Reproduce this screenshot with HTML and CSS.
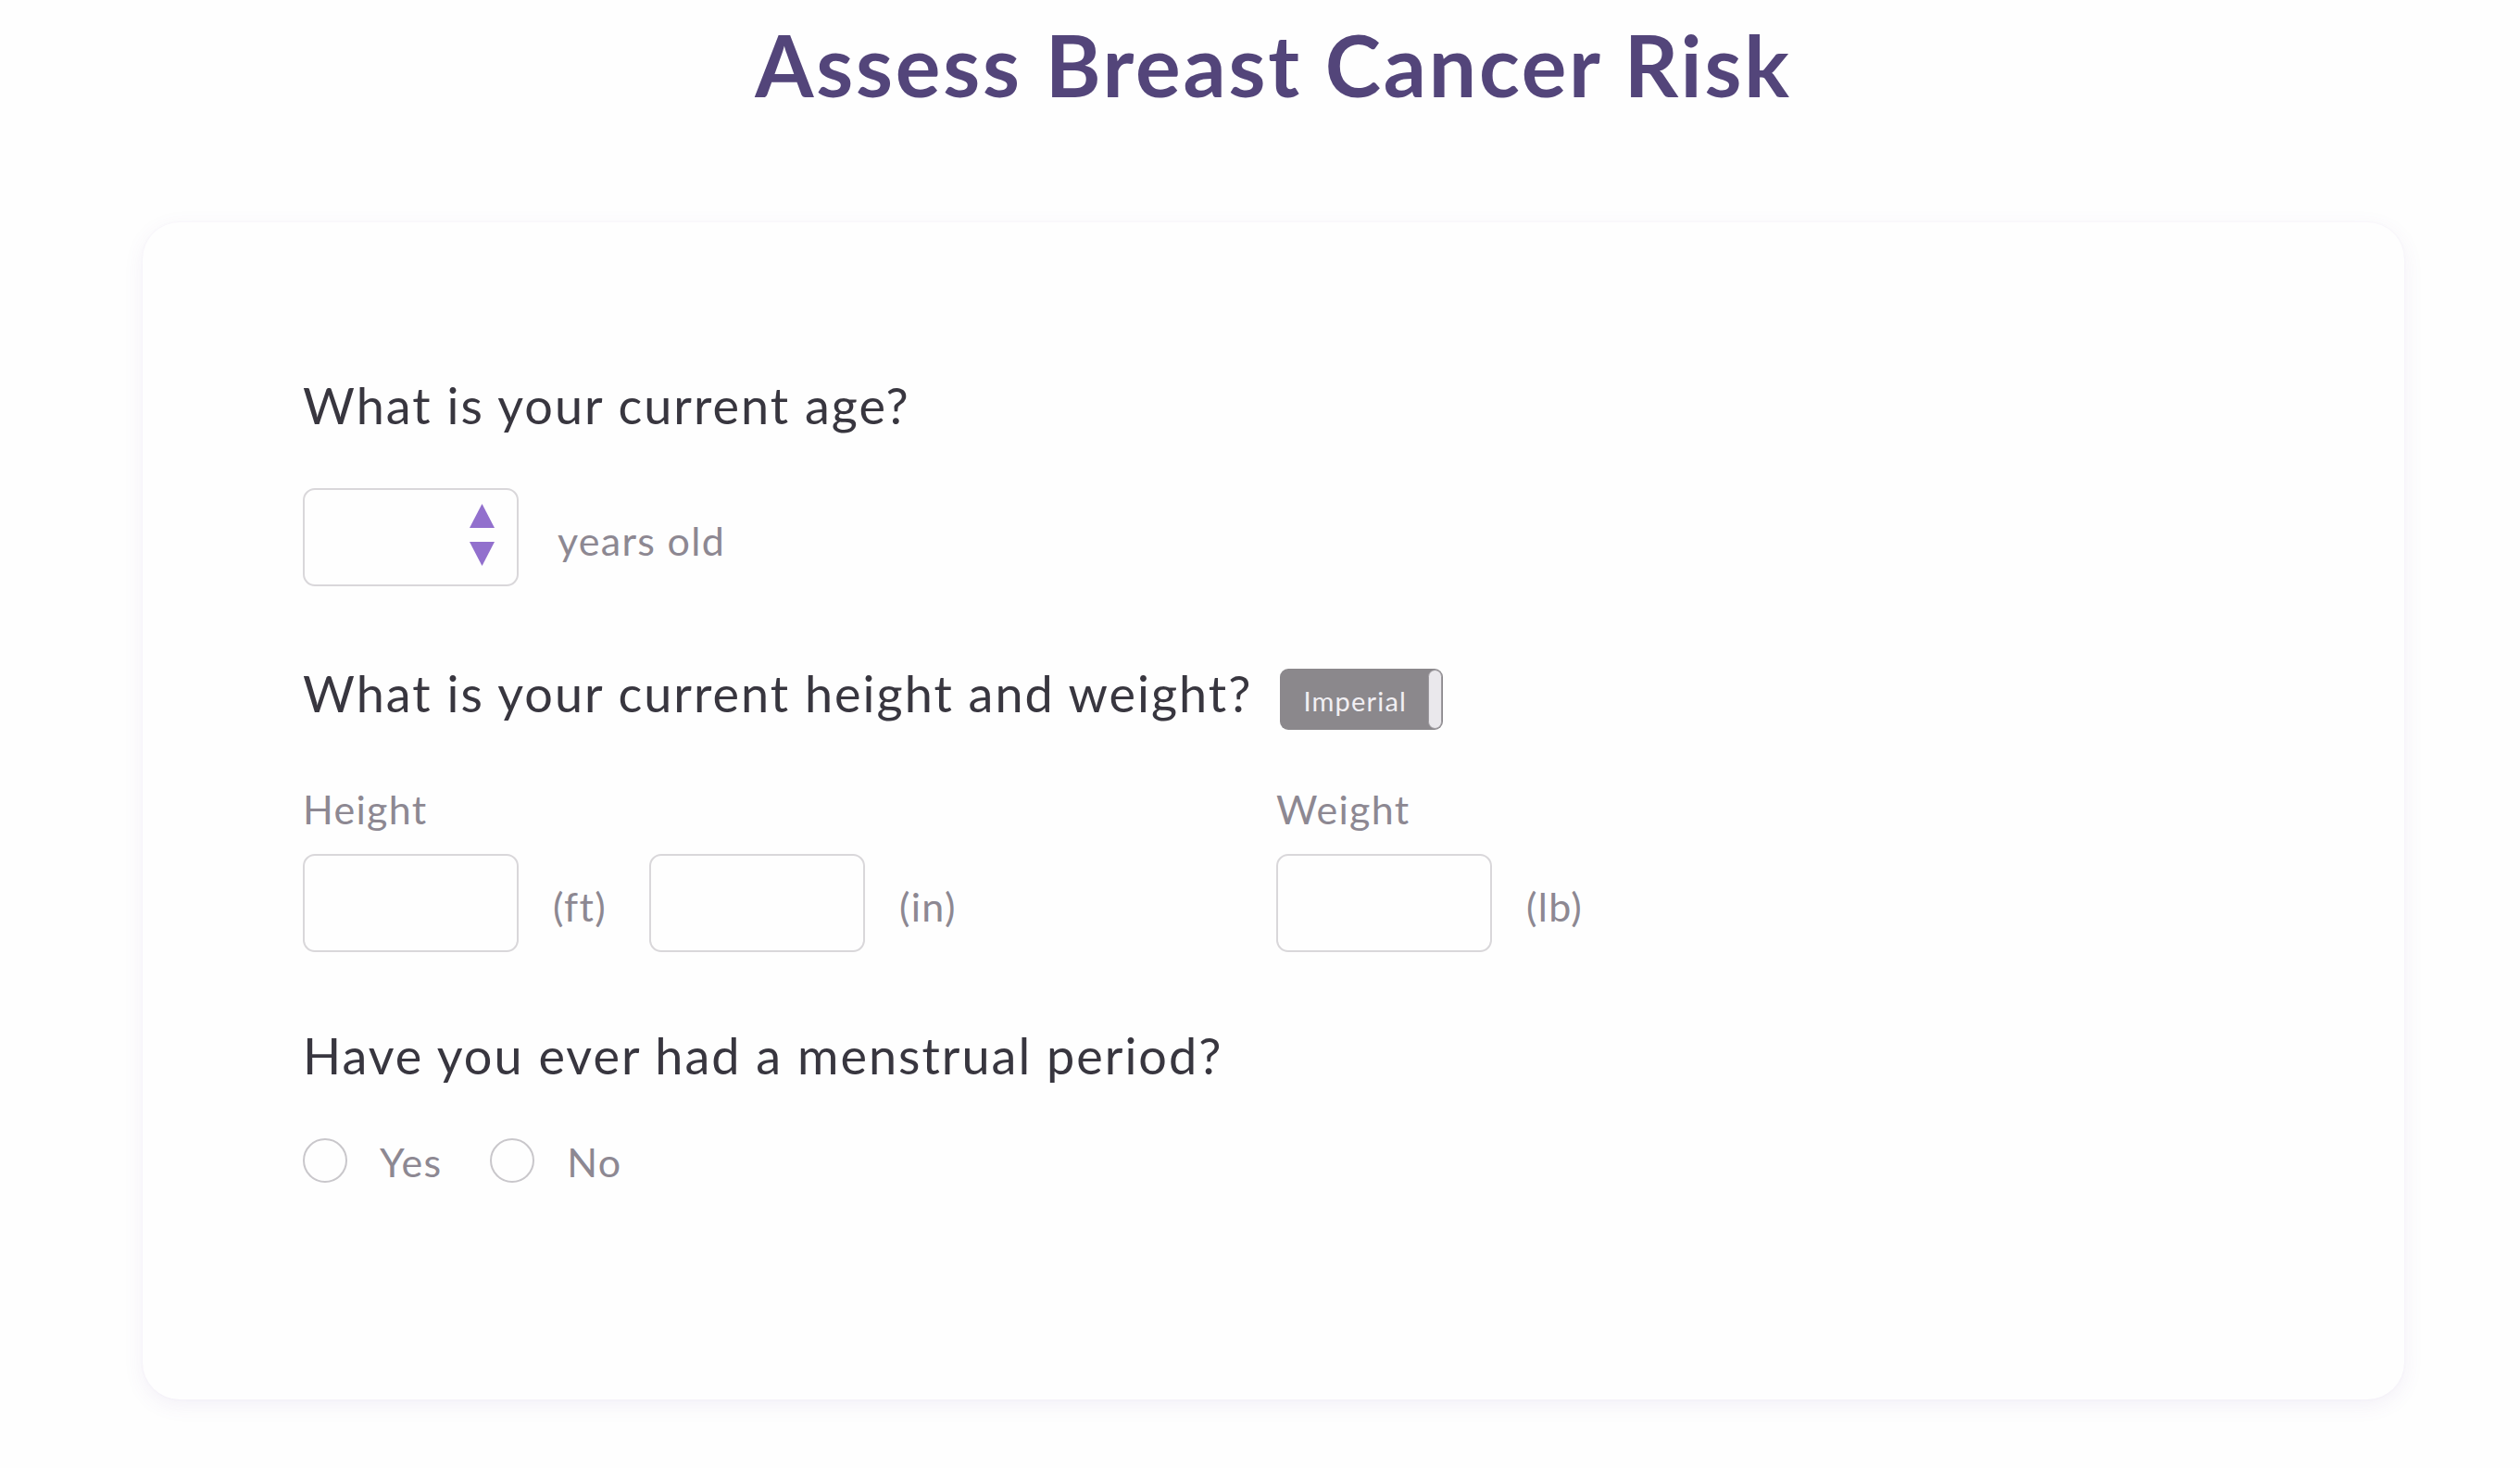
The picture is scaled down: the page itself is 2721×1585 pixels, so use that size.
FILE: index.html
```html
<!DOCTYPE html>
<html lang="en">
<head>
<meta charset="utf-8">
<title>Assess Breast Cancer Risk</title>
<link rel="stylesheet" href="styles.css">
</head>
<body>
<div class="page">
  <h1 class="title">Assess Breast Cancer Risk</h1>
  <div class="card">
    <h2 class="question">What is your current age?</h2>
    <div class="row age-row">
      <div class="box">
        <svg class="spinner" width="27" height="67" viewBox="0 0 27 67" aria-hidden="true">
          <polygon points="13.5,0 27,26 0,26" fill="#9270cd"/>
          <polygon points="0,41 27,41 13.5,67" fill="#9270cd"/>
        </svg>
      </div>
      <span class="unit unit-age">years old</span>
    </div>

    <div class="q-row">
      <h2 class="question">What is your current height and weight?</h2>
      <div class="toggle"><span class="toggle-text">Imperial</span><span class="knob"></span></div>
    </div>

    <div class="measures">
      <div class="measure">
        <div class="label">Height</div>
        <div class="row">
          <div class="box"></div><span class="unit">(ft)</span>
          <div class="box"></div><span class="unit">(in)</span>
        </div>
      </div>
      <div class="measure">
        <div class="label">Weight</div>
        <div class="row">
          <div class="box"></div><span class="unit">(lb)</span>
        </div>
      </div>
    </div>

    <h2 class="question q3">Have you ever had a menstrual period?</h2>
    <div class="radios">
      <span class="radio"></span><span class="radio-label">Yes</span>
      <span class="radio"></span><span class="radio-label">No</span>
    </div>
  </div>
</div>
</body>
</html>
```
FILE: styles.css
```css
html, body {
  margin: 0;
  padding: 0;
  background: #fefefe;
}
body {
  font-family: Lato, "Open Sans", "Liberation Sans", sans-serif;
}
.page {
  padding: 24px 125px 74px 154px;
}
.title {
  margin: 0;
  text-align: center;
  font-size: 91px;
  line-height: 91px;
  font-weight: 700;
  color: #53457a;
  letter-spacing: 2.8px;
}
.card {
  margin-top: 125px;
  background: #fefefe;
  border-radius: 40px;
  box-shadow: 0 6px 22px rgba(110, 80, 170, 0.08), 0 0 3px rgba(110, 80, 170, 0.05);
  padding: 171px 173px 234px 173px;
}
.question {
  margin: 0;
  font-size: 54px;
  line-height: 54px;
  font-weight: 400;
  color: #38363f;
  letter-spacing: 2px;
}
.row {
  display: flex;
  align-items: center;
}
.age-row {
  margin-top: 62px;
}
.box {
  box-sizing: border-box;
  width: 233px;
  height: 106px;
  border: 2px solid #d9d7da;
  border-radius: 13px;
  background: #fefefe;
  display: flex;
  justify-content: flex-end;
  padding: 15px 24px 0 0;
}
.unit {
  font-size: 43px;
  line-height: 43px;
  color: #8d8892;
  margin-left: 37px;
  margin-right: 46px;
  padding-top: 6px;
  letter-spacing: 1.3px;
}
.unit-age {
  margin-left: 42px;
}
.q-row {
  display: flex;
  align-items: flex-start;
  gap: 30px;
  margin-top: 89px;
}
.toggle {
  box-sizing: border-box;
  width: 176px;
  height: 66px;
  background: #8b888c;
  border-radius: 9px;
  display: flex;
  align-items: center;
  justify-content: space-between;
  padding: 1px 1px 1px 25px;
}
.toggle-text {
  font-size: 29px;
  line-height: 29px;
  color: #f1eff3;
  padding-top: 2px;
  letter-spacing: 1.2px;
}
.knob {
  box-sizing: border-box;
  width: 15px;
  height: 64px;
  border-radius: 8px;
  background: #eae8ec;
  border: 1px solid #9d9a9f;
}
.measures {
  display: grid;
  grid-template-columns: 1051px 1fr;
  margin-top: 64px;
}
.label {
  font-size: 43px;
  line-height: 43px;
  color: #8d8892;
  margin-bottom: 27px;
  letter-spacing: 1.3px;
}
.q3 {
  margin-top: 85px;
}
.radios {
  display: flex;
  align-items: center;
  margin-top: 62px;
}
.radio {
  box-sizing: border-box;
  width: 48px;
  height: 48px;
  border: 2px solid #c9c7cb;
  border-radius: 50%;
  background: #fefefe;
}
.radio-label {
  font-size: 43px;
  line-height: 43px;
  color: #8d8892;
  margin-left: 35px;
  margin-right: 52px;
  padding-top: 2px;
  letter-spacing: 1.3px;
}
```
